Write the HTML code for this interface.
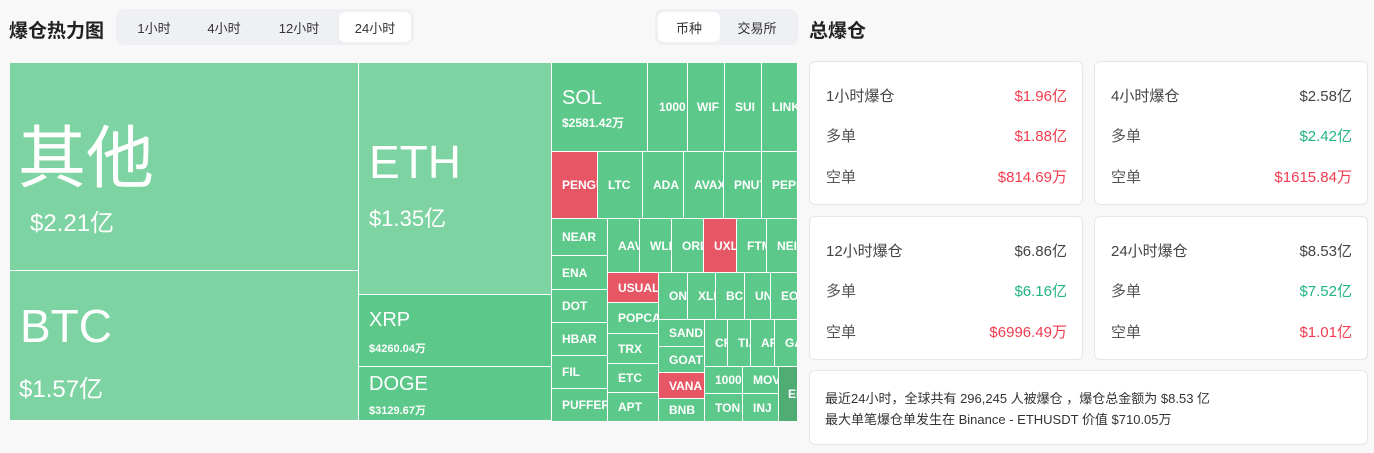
<!DOCTYPE html>
<html><head><meta charset="utf-8"><style>
*{margin:0;padding:0;box-sizing:border-box}
body{width:1374px;height:453px;background:#f8f8f8;font-family:"Liberation Sans","Noto Sans CJK SC",sans-serif;position:relative;overflow:hidden;color:#333}
.t{position:absolute;color:#fff;background:#5cc88a;border-right:1px solid #fff;border-bottom:1px solid #fff;font-size:12px;font-weight:bold;white-space:nowrap;overflow:hidden;display:flex;align-items:center;padding-left:10px}
.r{background:#e65665}.l{background:#7dd3a1}
.seg{position:absolute;background:#eef0f3;border-radius:8px;height:36px;display:flex;align-items:center;padding:3px;font-size:13px;color:#333}
.seg span{height:30px;display:flex;align-items:center;justify-content:center;border-radius:6px}
.seg .on{background:#fff}
.card{position:absolute;background:#fff;border:1px solid #e6e6e6;border-radius:6px}
.row{position:absolute;left:16px;right:15px;display:flex;justify-content:space-between;font-size:15px;color:#555}
.g{color:#20b486}.rd{color:#f23b50}.k{color:#444}
</style></head><body>
<div style="position:absolute;left:9px;top:16px;font-size:19px;font-weight:bold;color:#222">爆仓热力图</div>
<div class="seg" style="left:116px;top:9px;width:298px"><span style="width:70px">1小时</span><span style="width:70px">4小时</span><span style="width:80px">12小时</span><span class="on" style="width:72px">24小时</span></div>
<div class="seg" style="left:655px;top:9px;width:143px"><span class="on" style="width:62px">币种</span><span style="width:74px">交易所</span></div>
<div style="position:absolute;left:809px;top:16px;font-size:19px;font-weight:bold;color:#222">总爆仓</div>

<div class="t l" style="left:10px;top:63px;width:349px;height:208px;display:block;padding:0">
<div style="position:absolute;left:8px;top:40px;font-size:68px;font-weight:normal">其他</div>
<div style="position:absolute;left:20px;top:140px;font-size:24px;font-weight:normal">$2.21亿</div></div>
<div class="t l" style="left:10px;top:271px;width:349px;height:150px;display:block;padding:0">
<div style="position:absolute;left:10px;top:28px;font-size:46px;font-weight:normal">BTC</div>
<div style="position:absolute;left:9px;top:98px;font-size:24px;font-weight:normal">$1.57亿</div></div>
<div class="t l" style="left:359px;top:63px;width:193px;height:232px;display:block;padding:0">
<div style="position:absolute;left:10px;top:72px;font-size:46px;font-weight:normal">ETH</div>
<div style="position:absolute;left:10px;top:138px;font-size:22px;font-weight:normal">$1.35亿</div></div>
<div class="t" style="left:359px;top:295px;width:193px;height:72px;display:block;padding:0">
<div style="position:absolute;left:10px;top:14px;font-size:20px;font-weight:normal">XRP</div>
<div style="position:absolute;left:10px;top:45px;font-size:11px">$4260.04万</div></div>
<div class="t" style="left:359px;top:367px;width:193px;height:54px;display:block;padding:0">
<div style="position:absolute;left:10px;top:6px;font-size:20px;font-weight:normal">DOGE</div>
<div style="position:absolute;left:10px;top:35px;font-size:11px">$3129.67万</div></div>
<div class="t" style="left:552px;top:63px;width:96px;height:89px;display:block;padding:0">
<div style="position:absolute;left:10px;top:24px;font-size:20px;font-weight:normal">SOL</div>
<div style="position:absolute;left:10px;top:51px;font-size:12px">$2581.42万</div></div>
<div class="t" style="left:648px;top:63px;width:40px;height:89px;padding-left:11px">1000</div>
<div class="t" style="left:688px;top:63px;width:37px;height:89px;padding-left:9px">WIF</div>
<div class="t" style="left:725px;top:63px;width:37px;height:89px">SUI</div>
<div class="t" style="left:762px;top:63px;width:36px;height:89px">LINK</div>
<div class="t r" style="left:552px;top:152px;width:46px;height:67px">PENGU</div>
<div class="t" style="left:598px;top:152px;width:45px;height:67px">LTC</div>
<div class="t" style="left:643px;top:152px;width:41px;height:67px">ADA</div>
<div class="t" style="left:684px;top:152px;width:40px;height:67px">AVAX</div>
<div class="t" style="left:724px;top:152px;width:38px;height:67px">PNUT</div>
<div class="t" style="left:762px;top:152px;width:36px;height:67px">PEPE</div>
<div class="t" style="left:552px;top:219px;width:56px;height:37px">NEAR</div>
<div class="t" style="left:552px;top:256px;width:56px;height:34px">ENA</div>
<div class="t" style="left:552px;top:290px;width:56px;height:33px">DOT</div>
<div class="t" style="left:552px;top:323px;width:56px;height:33px">HBAR</div>
<div class="t" style="left:552px;top:356px;width:56px;height:33px">FIL</div>
<div class="t" style="left:552px;top:389px;width:56px;height:33px">PUFFER</div>
<div class="t" style="left:608px;top:219px;width:32px;height:54px">AAVE</div>
<div class="t" style="left:640px;top:219px;width:32px;height:54px">WLD</div>
<div class="t" style="left:672px;top:219px;width:32px;height:54px">ORDI</div>
<div class="t r" style="left:704px;top:219px;width:33px;height:54px">UXLINK</div>
<div class="t" style="left:737px;top:219px;width:30px;height:54px">FTM</div>
<div class="t" style="left:767px;top:219px;width:31px;height:54px">NEIRO</div>
<div class="t r" style="left:608px;top:273px;width:51px;height:30px">USUAL</div>
<div class="t" style="left:608px;top:303px;width:51px;height:31px">POPCAT</div>
<div class="t" style="left:608px;top:334px;width:51px;height:30px">TRX</div>
<div class="t" style="left:608px;top:364px;width:51px;height:29px">ETC</div>
<div class="t" style="left:608px;top:393px;width:51px;height:29px">APT</div>
<div class="t" style="left:659px;top:273px;width:29px;height:47px">ONDO</div>
<div class="t" style="left:688px;top:273px;width:28px;height:47px">XLM</div>
<div class="t" style="left:716px;top:273px;width:29px;height:47px">BCH</div>
<div class="t" style="left:745px;top:273px;width:26px;height:47px">UNI</div>
<div class="t" style="left:771px;top:273px;width:27px;height:47px">EOS</div>
<div class="t" style="left:659px;top:320px;width:46px;height:27px">SAND</div>
<div class="t" style="left:659px;top:347px;width:46px;height:26px">GOAT</div>
<div class="t r" style="left:659px;top:373px;width:46px;height:26px">VANA</div>
<div class="t" style="left:659px;top:399px;width:46px;height:23px">BNB</div>
<div class="t" style="left:705px;top:320px;width:23px;height:47px">CRV</div>
<div class="t" style="left:728px;top:320px;width:23px;height:47px">TIA</div>
<div class="t" style="left:751px;top:320px;width:24px;height:47px">AR</div>
<div class="t" style="left:775px;top:320px;width:23px;height:47px">GALA</div>
<div class="t" style="left:705px;top:367px;width:38px;height:27px">1000S</div>
<div class="t" style="left:743px;top:367px;width:36px;height:27px">MOVE</div>
<div class="t" style="left:705px;top:394px;width:38px;height:28px">TON</div>
<div class="t" style="left:743px;top:394px;width:36px;height:28px">INJ</div>
<div class="t" style="left:779px;top:367px;width:19px;height:55px;background:#4fac73;padding-left:9px">ENS</div>
<div style="position:absolute;left:0;top:421px;width:800px;height:32px;background:#f8f8f8"></div>

<div class="card" style="left:809px;top:61px;width:274px;height:144px">
<div class="row" style="top:23px"><span class="k">1小时爆仓</span><span class="rd">$1.96亿</span></div>
<div class="row" style="top:63px"><span>多单</span><span class="rd">$1.88亿</span></div>
<div class="row" style="top:104px"><span>空单</span><span class="rd">$814.69万</span></div></div>
<div class="card" style="left:1094px;top:61px;width:274px;height:144px">
<div class="row" style="top:23px"><span class="k">4小时爆仓</span><span class="k">$2.58亿</span></div>
<div class="row" style="top:63px"><span>多单</span><span class="g">$2.42亿</span></div>
<div class="row" style="top:104px"><span>空单</span><span class="rd">$1615.84万</span></div></div>
<div class="card" style="left:809px;top:216px;width:274px;height:144px">
<div class="row" style="top:23px"><span class="k">12小时爆仓</span><span class="k">$6.86亿</span></div>
<div class="row" style="top:63px"><span>多单</span><span class="g">$6.16亿</span></div>
<div class="row" style="top:104px"><span>空单</span><span class="rd">$6996.49万</span></div></div>
<div class="card" style="left:1094px;top:216px;width:274px;height:144px">
<div class="row" style="top:23px"><span class="k">24小时爆仓</span><span class="k">$8.53亿</span></div>
<div class="row" style="top:63px"><span>多单</span><span class="g">$7.52亿</span></div>
<div class="row" style="top:104px"><span>空单</span><span class="rd">$1.01亿</span></div></div>
<div class="card" style="left:809px;top:370px;width:559px;height:75px;padding:17px 0 0 15px;font-size:13px;line-height:21px;color:#333">
最近24小时，全球共有 296,245 人被爆仓 ，爆仓总金额为 $8.53 亿<br>最大单笔爆仓单发生在 Binance - ETHUSDT 价值 $710.05万</div>
</body></html>
